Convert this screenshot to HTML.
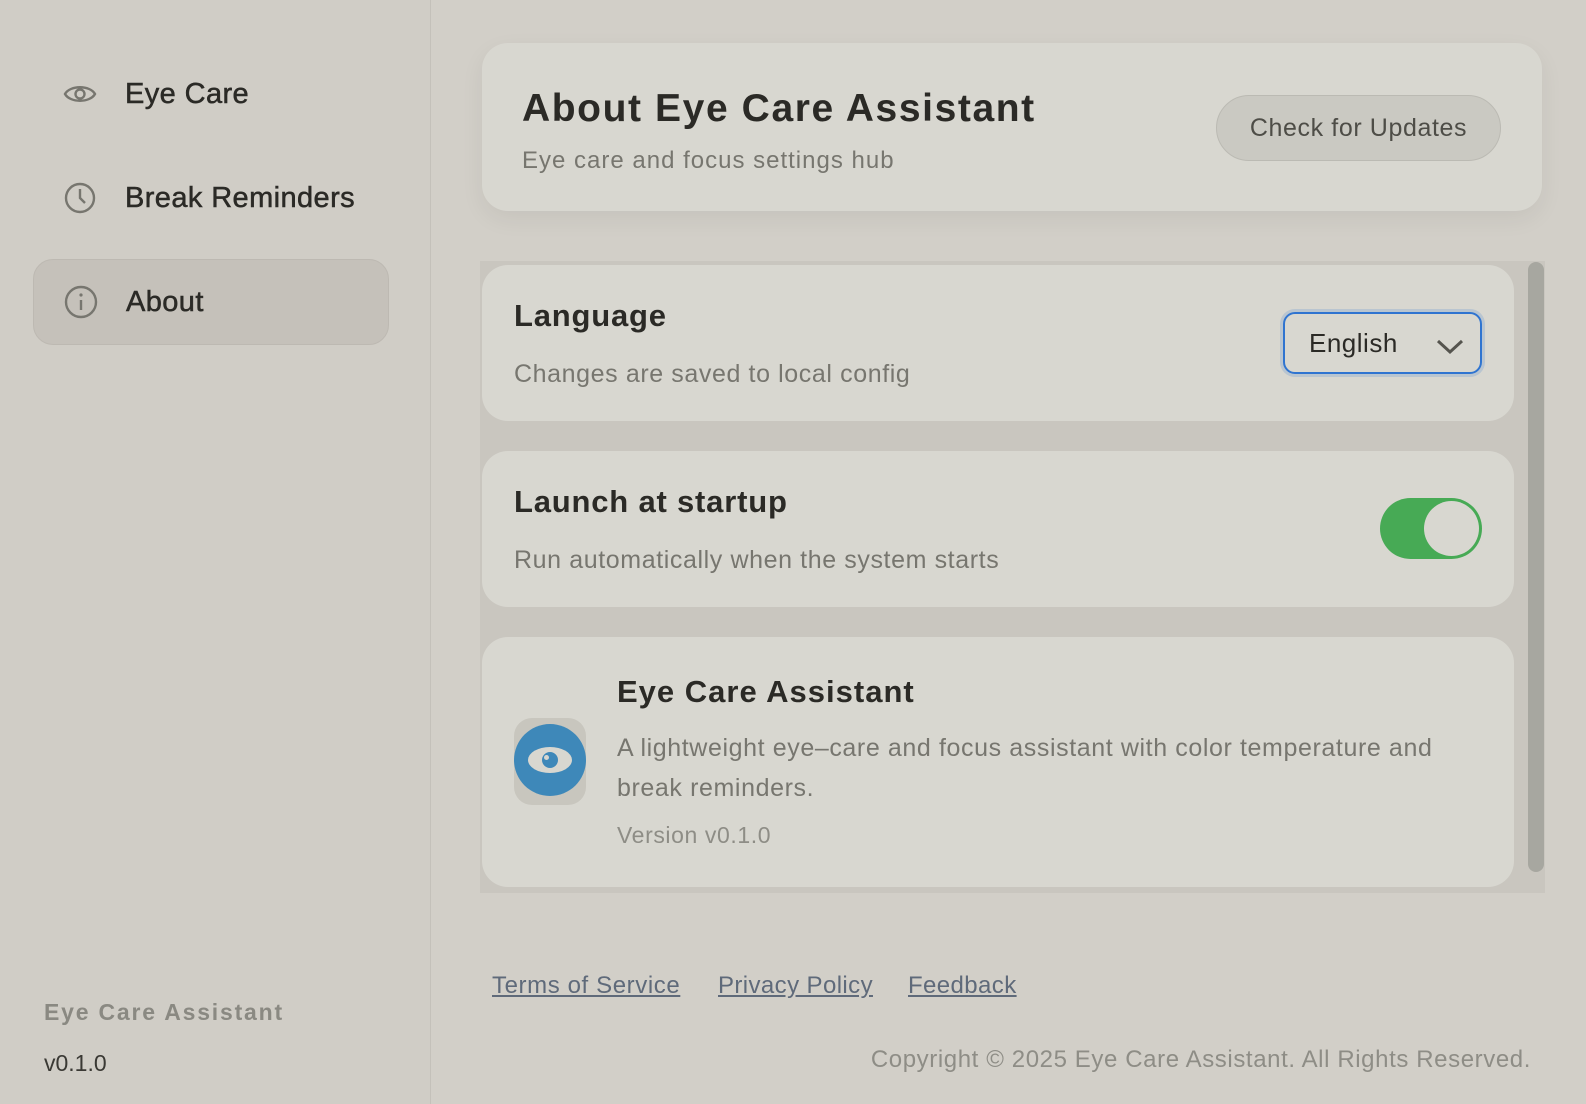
<!DOCTYPE html>
<html><head><meta charset="utf-8"><style>
*{box-sizing:border-box;margin:0;padding:0}
body{width:1586px;height:1104px;background:#d2cfc8;font-family:"Liberation Sans",sans-serif;color:#2b2a26;position:relative;overflow:hidden}
.side{position:absolute;left:0;top:0;width:431px;height:1104px;background:#d0cdc6;border-right:1px solid #c4c1ba}
.nav{position:absolute;left:33px;width:356px;height:86px;display:flex;align-items:center;font-size:29px;letter-spacing:0.4px}
.nav svg{position:absolute;left:30px}
.nav span{position:absolute;left:92px;-webkit-text-stroke:0.5px #2b2a26}
.nav.act{background:#c5c1ba;border:1px solid #bdb9b2;border-radius:20px}
.card{position:absolute;background:#d8d7d0;border-radius:26px}
.t{position:absolute;white-space:nowrap}
.g{letter-spacing:0.6px}
</style></head><body>
<div class="side">
 <div class="nav" style="top:51px"><svg width="34" height="24" viewBox="0 0 34 24"><path d="M2 12C7 3 27 3 32 12C27 21 7 21 2 12Z" fill="none" stroke="#77766f" stroke-width="2.4"/><circle cx="17" cy="12" r="4.5" fill="none" stroke="#77766f" stroke-width="2.4"/></svg><span>Eye Care</span></div>
 <div class="nav" style="top:155px"><svg width="34" height="34" viewBox="0 0 34 34"><circle cx="17" cy="17" r="14" fill="none" stroke="#77766f" stroke-width="2.4"/><path d="M17 8V17L22 22" fill="none" stroke="#77766f" stroke-width="2.4"/></svg><span>Break Reminders</span></div>
 <div class="nav act" style="top:259px"><svg width="34" height="34" viewBox="0 0 34 34"><circle cx="17" cy="17" r="15" fill="none" stroke="#77766f" stroke-width="2.4"/><circle cx="17" cy="10" r="1.6" fill="#77766f"/><path d="M17 15V25" stroke="#77766f" stroke-width="2.4"/></svg><span>About</span></div>
 <div class="t" style="left:44px;top:999px;font-size:23px;font-weight:700;color:#8a8982;letter-spacing:1.8px">Eye Care Assistant</div>
 <div class="t" style="left:44px;top:1050px;font-size:23px;color:#3a3934">v0.1.0</div>
</div>

<div class="card" style="left:482px;top:43px;width:1060px;height:168px;box-shadow:0 8px 24px rgba(0,0,0,0.06)">
 <div class="t" style="left:40px;top:44px;font-size:39px;font-weight:700;color:#2b2a26;letter-spacing:1.6px">About Eye Care Assistant</div>
 <div class="t g" style="left:40px;top:104px;font-size:24px;color:#77766f;letter-spacing:1px">Eye care and focus settings hub</div>
 <div style="position:absolute;left:734px;top:52px;width:285px;height:66px;border-radius:33px;background:#cac9c2;border:1.5px solid #bbbab3;font-size:25px;color:#4e4d47;display:flex;align-items:center;justify-content:center;letter-spacing:0.6px">Check for Updates</div>
</div>

<div style="position:absolute;left:480px;top:261px;width:1065px;height:632px;background:#c9c6bf"></div>
<div style="position:absolute;left:1528px;top:262px;width:16px;height:610px;background:#a7a7a0;border-radius:8px"></div>

<div class="card" style="left:482px;top:265px;width:1032px;height:156px">
 <div class="t" style="left:32px;top:33px;font-size:31px;font-weight:700;letter-spacing:0.8px">Language</div>
 <div class="t g" style="left:32px;top:95px;font-size:25px;color:#77766f">Changes are saved to local config</div>
 <div style="position:absolute;left:801px;top:47px;width:199px;height:62px;border:2px solid #2f74d0;border-radius:12px;box-shadow:0 0 0 3px rgba(47,116,208,0.18)">
  <div class="t" style="left:24px;top:14px;font-size:26px;color:#2b2a26;letter-spacing:0.5px">English</div>
  <svg style="position:absolute;left:150px;top:24px" width="30" height="18" viewBox="0 0 30 18"><path d="M3 3L15 14L27 3" fill="none" stroke="#55544e" stroke-width="3"/></svg>
 </div>
</div>

<div class="card" style="left:482px;top:451px;width:1032px;height:156px">
 <div class="t" style="left:32px;top:33px;font-size:31px;font-weight:700;letter-spacing:0.8px">Launch at startup</div>
 <div class="t g" style="left:32px;top:95px;font-size:25px;color:#77766f">Run automatically when the system starts</div>
 <div style="position:absolute;left:898px;top:47px;width:102px;height:61px;border-radius:31px;background:#47aa55">
  <div style="position:absolute;right:3px;top:3px;width:55px;height:55px;border-radius:50%;background:#d8d7d0"></div>
 </div>
</div>

<div class="card" style="left:482px;top:637px;width:1032px;height:250px">
 <div style="position:absolute;left:32px;top:81px;width:72px;height:87px;border-radius:18px;background:#c8c6be"></div>
 <div style="position:absolute;left:32px;top:87px;width:72px;height:72px;border-radius:50%;background:#3e88b9">
  <div style="position:absolute;left:14px;top:23px;width:44px;height:26px;border-radius:50%;background:#d8d7d0"></div>
  <div style="position:absolute;left:28px;top:28px;width:16px;height:16px;border-radius:50%;background:#3e88b9"></div>
  <div style="position:absolute;left:30px;top:31px;width:5px;height:5px;border-radius:50%;background:#d8d7d0"></div>
 </div>
 <div class="t" style="left:135px;top:37px;font-size:31px;font-weight:700;letter-spacing:1px">Eye Care Assistant</div>
 <div class="t g" style="left:135px;top:91px;font-size:25px;color:#77766f;line-height:40px;white-space:normal;width:870px">A lightweight eye–care and focus assistant with color temperature and break reminders.</div>
 <div class="t g" style="left:135px;top:185px;font-size:23px;color:#8e8d86">Version v0.1.0</div>
</div>

<div class="t" style="left:492px;top:972px;font-size:24px;color:#5f6a7a;text-decoration:underline;letter-spacing:0.6px">Terms of Service</div>
<div class="t" style="left:718px;top:972px;font-size:24px;color:#5f6a7a;text-decoration:underline;letter-spacing:0.4px">Privacy Policy</div>
<div class="t" style="left:908px;top:972px;font-size:24px;color:#5f6a7a;text-decoration:underline;letter-spacing:0.4px">Feedback</div>
<div class="t" style="right:55px;top:1046px;font-size:24px;color:#8e8d86;letter-spacing:0.6px">Copyright © 2025 Eye Care Assistant. All Rights Reserved.</div>
</body></html>
